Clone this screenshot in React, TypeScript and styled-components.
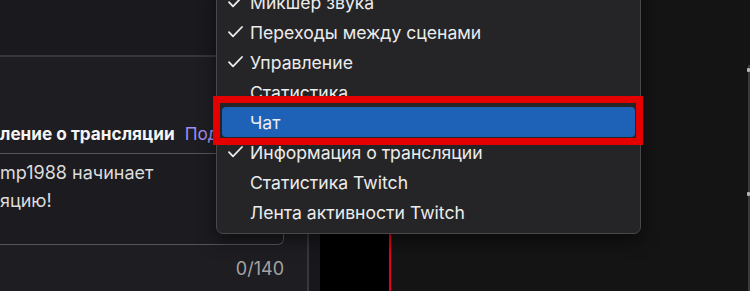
import React from 'react';
import styled, { createGlobalStyle } from 'styled-components';

const GlobalStyle = createGlobalStyle`
  html, body {
    margin: 0;
    padding: 0;
    background: #141414;
  }
  body {
    font-family: Inter, "Noto Sans", "Liberation Sans", sans-serif;
    -webkit-font-smoothing: antialiased;
  }
`;

type MenuEntry = { label: string; checked?: boolean; active?: boolean };

const entries: MenuEntry[] = [
  { label: 'Микшер звука', checked: true },
  { label: 'Переходы между сценами', checked: true },
  { label: 'Управление', checked: true },
  { label: 'Статистика' },
  { label: 'Чат', active: true },
  { label: 'Информация о трансляции', checked: true },
  { label: 'Статистика Twitch' },
  { label: 'Лента активности Twitch' },
];

const Check = () => (
  <svg width="15" height="12" viewBox="0 0 15 12" fill="none">
    <path d="M1 6.2 L5 10.4 L14 1" stroke="#ececec" strokeWidth="1.8" strokeLinecap="round" strokeLinejoin="round" />
  </svg>
);

export default function App() {
  return (
    <>
      <GlobalStyle />
      <Screen>
        <LeftPanel>
          <TopSection />
          <NoticeSection>
            <TitleRow>
              <Title>ление о трансляции</Title>
              <Link>Подробнее</Link>
            </TitleRow>
            <MessageBox>
              <MessageLine>mp1988 начинает</MessageLine>
              <MessageLine>яцию!</MessageLine>
            </MessageBox>
            <Counter>0/140</Counter>
          </NoticeSection>
        </LeftPanel>
        <Splitter />
        <Gutter />
        <Preview>
          <Canvas />
          <SourceOutline />
          <Dock>
            <DockEdge>
              <Handle $top={3} />
              <Handle $top={127} />
            </DockEdge>
          </Dock>
        </Preview>

        <Menu>
          {entries.map((e) => (
            <Item key={e.label} $active={e.active}>
              <Mark>{e.checked && <Check />}</Mark>
              <span>{e.label}</span>
            </Item>
          ))}
        </Menu>
        <Annotation />
      </Screen>
    </>
  );
}

const Screen = styled.div`
  position: relative;
  width: 750px;
  height: 291px;
  overflow: hidden;
  display: flex;
  background: #141414;
`;

const LeftPanel = styled.div`
  width: 307px;
  display: flex;
  flex-direction: column;
  background: #1e1d22;
`;

const TopSection = styled.div`
  height: 55px;
  background: #1a191e;
  border-bottom: 2px solid #37363b;
`;

const NoticeSection = styled.div`
  flex: 1;
  display: flex;
  flex-direction: column;
  padding-top: 65px;
  width: 284px;
`;

const TitleRow = styled.div`
  display: flex;
  align-items: center;
  gap: 10px;
  height: 22px;
  width: 213px;
  overflow: hidden;
  white-space: nowrap;
`;

const Title = styled.span`
  font-size: 17.2px;
  font-weight: 700;
  color: #f4f4f4;
`;

const Link = styled.span`
  font-size: 17.2px;
  color: #a28ef2;
`;

const MessageBox = styled.div`
  margin-top: 9px;
  height: 92px;
  box-sizing: border-box;
  border: 1px solid #55545a;
  border-left: none;
  border-radius: 0 0 6px 0;
  background: #1c1b20;
  padding-top: 5px;
`;

const MessageLine = styled.div`
  font-size: 18px;
  line-height: 28px;
  color: #dcdcdc;
`;

const Counter = styled.div`
  margin-top: 13px;
  text-align: right;
  font-size: 18px;
  color: #a3a3a3;
`;

const Splitter = styled.div`
  width: 2px;
  background: #38373c;
`;

const Gutter = styled.div`
  width: 11px;
  background: #18171c;
`;

const Preview = styled.div`
  flex: 1;
  display: flex;
`;

const Canvas = styled.div`
  width: 69px;
  background: #000;
`;

const SourceOutline = styled.div`
  width: 2px;
  background: #e4001b;
`;

const Dock = styled.div`
  flex: 1;
  display: flex;
  justify-content: flex-end;
  background: #141414;
`;

const DockEdge = styled.div`
  position: relative;
  width: 2px;
  margin-top: 65px;
  background: #3a3a3c;
`;

const Handle = styled.div<{ $top: number }>`
  position: absolute;
  left: -1px;
  top: ${(p) => p.$top}px;
  width: 3px;
  height: 4px;
  border-radius: 1px;
  background: #b5b5b5;
`;

const Menu = styled.div`
  position: absolute;
  left: 216px;
  top: -21px;
  width: 425px;
  box-sizing: border-box;
  padding: 7px 0 6px;
  background: #252527;
  border: 1px solid #48484b;
  border-radius: 7px;
  box-shadow: 0 6px 18px rgba(0, 0, 0, 0.5);
`;

const Item = styled.div<{ $active?: boolean }>`
  display: flex;
  align-items: center;
  height: 30px;
  margin: 0 5px;
  padding-left: 6px;
  border-radius: 4px;
  font-size: 17.6px;
  color: #ececec;
  background: ${(p) => (p.$active ? '#1e62b8' : 'transparent')};
`;

const Mark = styled.span`
  width: 22px;
  display: flex;
  align-items: center;
`;

const Annotation = styled.div`
  position: absolute;
  left: 213px;
  top: 96px;
  width: 430px;
  height: 49px;
  box-sizing: border-box;
  border: 7px solid #e50000;
`;
